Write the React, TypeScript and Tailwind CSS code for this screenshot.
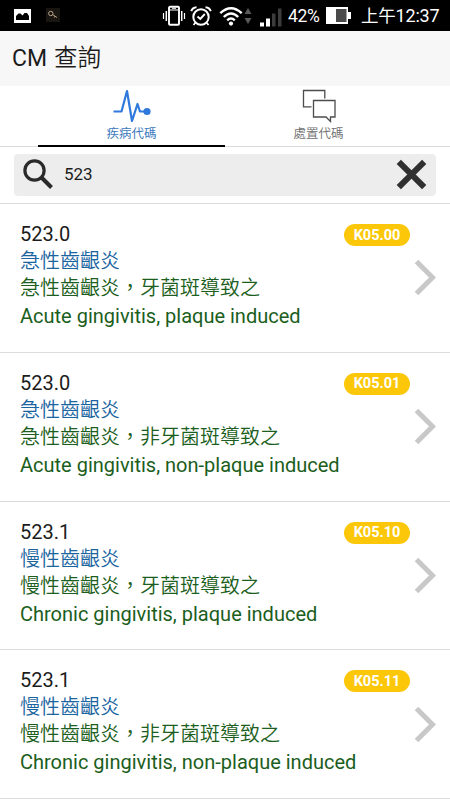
const codes = [
    { code: '523.0', icd10: 'K05.00', name: '急性齒齦炎', zh: '急性齒齦炎，牙菌斑導致之', en: 'Acute gingivitis, plaque induced' },
    { code: '523.0', icd10: 'K05.01', name: '急性齒齦炎', zh: '急性齒齦炎，非牙菌斑導致之', en: 'Acute gingivitis, non-plaque induced' },
    { code: '523.1', icd10: 'K05.10', name: '慢性齒齦炎', zh: '慢性齒齦炎，牙菌斑導致之', en: 'Chronic gingivitis, plaque induced' },
    { code: '523.1', icd10: 'K05.11', name: '慢性齒齦炎', zh: '慢性齒齦炎，非牙菌斑導致之', en: 'Chronic gingivitis, non-plaque induced' },
];

function StatusBar() {
    return (
        <div className="flex h-[31px] shrink-0 items-center bg-black pl-[14px] pr-[11px] text-white">
            {/* notifications */}
            <svg className="h-[14px] w-[17px]" viewBox="0 0 17 14">
                <rect width="17" height="14" fill="#fff" />
                <path d="M2 11V7L4.500 4.500L6.500 4.500L8.500 6.500L10.500 4L13 4L15 7V11Z" fill="#000" />
            </svg>
            <svg className="-mt-[2px] ml-[15px] h-[14px] w-[14px]" viewBox="0 0 14 14">
                <rect width="14" height="14" fill="#191511" />
                <circle cx="4.800" cy="5.500" r="2.200" fill="none" stroke="#b9a38a" />
                <path d="M6.500 6.500L11 9.500M9 8.200L8.300 9.500" stroke="#b9a38a" fill="none" />
            </svg>
            <div className="flex-1"></div>

            {/* vibrate */}
            <svg className="h-[22px] w-[24px]" viewBox="0 0 24 22" fill="none" stroke="#fff">
                <rect x="7" y="1.800" width="10" height="18" rx="1" strokeWidth="1.900" />
                <path d="M7 5H17M10 3.300H14" strokeWidth="1" />
                <path d="M4.300 6V16M19.700 6V16" strokeWidth="1.500" />
                <path d="M1.500 8V14M22.500 8V14" strokeWidth="1.200" />
            </svg>
            {/* alarm */}
            <svg className="ml-[4px] h-[22px] w-[22px]" viewBox="0 0 22 22" fill="none" stroke="#fff">
                <circle cx="11" cy="12" r="7.700" strokeWidth="2" />
                <path d="M7.500 11.500L10.300 14L14.800 9" strokeWidth="1.900" />
                <path d="M1.200 6.200Q2.500 2.500 6.500 2.200M20.800 6.200Q19.500 2.500 15.500 2.200" strokeWidth="2" />
                <path d="M5.500 17.500L3.500 20M16.500 17.500L18.500 20" strokeWidth="1.800" />
            </svg>
            {/* wifi */}
            <svg className="ml-[7px] h-[20px] w-[24px]" viewBox="0 0 24 20" fill="none" stroke="#fff" strokeWidth="2.400">
                <path d="M1.300 7.200Q12 -2.800 22.700 7.200" />
                <path d="M4.800 11Q12 3.800 19.200 11" />
                <path d="M8.200 14.300Q12 10.600 15.800 14.300" />
                <circle cx="12" cy="17.600" r="2.100" fill="#fff" stroke="none" />
            </svg>
            <svg className="ml-[1px] h-[16px] w-[8px]" viewBox="0 0 8 16" fill="#5a5a5a">
                <path d="M4 0L7.500 6H0.500ZM4 16L0.500 10H7.500Z" />
            </svg>
            {/* signal */}
            <svg className="ml-[8px] mt-[3px] h-[19px] w-[22px]" viewBox="0 0 22 19">
                <rect x="0" y="14.500" width="4" height="4" fill="#fff" />
                <rect x="6" y="10.500" width="4" height="8" fill="#fff" />
                <rect x="12" y="5.500" width="3.500" height="13" fill="#3c3c3c" />
                <rect x="18" y="0.500" width="3.500" height="18" fill="#3c3c3c" />
            </svg>
            <span className="ml-[6px] mt-[2px] w-[33px] whitespace-nowrap text-[17.500px] tracking-[-0.300px]">42%</span>
            <svg className="ml-[5px] h-[19px] w-[25px]" viewBox="0 0 25 19">
                <path d="M0 1H22V6H25V13H22V18H0Z" fill="#fff" />
                <rect x="10" y="3" width="10.500" height="13" fill="#4a4a4a" />
            </svg>
            <span className="ml-[10px] w-[78px] whitespace-nowrap text-[18px] tracking-[-0.200px]"><span className="text-[17.500px]">上午</span>12:37</span>
        </div>
    )
}

function Tabs() {
    return (
        <nav className="flex h-[61px] shrink-0 border-b border-[#dcdcdc] px-[38px] text-[12.500px] leading-[16px]">
            <div className="-mb-px flex w-[187px] flex-col items-center border-b-2 border-black text-[#3b78bd]">
                <svg className="mt-[3px] h-[34px] w-[38px]" viewBox="0 0 38 34" fill="none" stroke="#2f78dc" strokeWidth="2.200">
                    <path d="M0.500 22.500H8.500L14 2L19 32L24.500 15L27 22.500H33" strokeLinejoin="round" />
                    <circle cx="34" cy="22.500" r="3.600" fill="#2f78dc" stroke="none" />
                </svg>
                <span className="mt-[3px]">疾病代碼</span>
            </div>
            <div className="flex w-[187px] flex-col items-center text-[#6e6e6e]">
                <svg className="mt-[3px] h-[34px] w-[34px]" viewBox="0 0 34 34" fill="none" stroke="#4c4c4c" strokeWidth="1.300">
                    <path d="M9.500 17.800H1.500V1.500H22.800V9.500" />
                    <path d="M11.500 11.500H33V28H28.500V32.500L24 28H11.500Z" />
                </svg>
                <span className="mt-[3px] font-[350]">處置代碼</span>
            </div>
        </nav>
    )
}

function SearchBar() {
    return (
        <div className="flex h-[57px] shrink-0 items-center border-b border-[#dcdcdc] px-[14px]">
            <div className="flex h-[42px] w-full items-center rounded-[4px] bg-[#ededed] px-[9px]">
                <svg className="-mt-[2px] h-[30px] w-[30px]" viewBox="0 0 30 30" fill="none" stroke="#2a2a2a">
                    <circle cx="11.500" cy="11.500" r="9.600" strokeWidth="3.200" />
                    <path d="M18.500 18.500L28.500 28.500" strokeWidth="4" />
                </svg>
                <span className="-mt-px ml-[11px] flex-1 text-[17px] text-[#1c1c1c]">523</span>
                <svg className="-mt-[2px] h-[31px] w-[31px]" viewBox="0 0 31 31" stroke="#303030" strokeWidth="6">
                    <path d="M2.800 2.800L28.200 28.200M28.200 2.800L2.800 28.200" />
                </svg>
            </div>
        </div>
    )
}

function CodeRow({ item }: { item: (typeof codes)[number] }) {
    return (
        <li className="flex h-[148.75px] shrink-0 border-b border-[#dcdcdc] pl-[20px] pr-[14px] text-[20px] leading-[27px]">
            <div className="flex-1 whitespace-nowrap pt-[17px]">
                <p className="text-[#1c1c1c]">{item.code}</p>
                <p className="font-[350] text-[#1a659f]">{item.name}</p>
                <p className="font-[350] text-[#1b5e20]">{item.zh}</p>
                <p className="mt-px text-[#1b5e20]">{item.en}</p>
            </div>
            <div className="relative flex w-[22px] items-center">
                <span className="absolute right-[26px] top-[20px] flex h-[22px] w-[66px] items-center justify-center rounded-full bg-[#fcc708] text-[14.500px] font-bold text-white">{item.icd10}</span>
                <svg className="h-[37px] w-[22px]" viewBox="0 0 22 37" fill="none" stroke="#c8c8c8" strokeWidth="5">
                    <path d="M2.500 2.500L18.500 18.500L2.500 34.500" />
                </svg>
            </div>
        </li>
    )
}

export default function App() {
    return (
        <main className="flex h-[800px] w-[450px] flex-col overflow-hidden bg-white font-['Roboto','Noto_Sans_CJK_TC',sans-serif]">
            <StatusBar />
            <header className="flex h-[55px] shrink-0 items-center gap-[7px] bg-[#f7f7f7] pl-[12px] pt-px text-[23px] text-[#1c1c1c]">
                <span>CM</span>
                <span className="text-[23.500px] font-[350]">查詢</span>
            </header>
            <Tabs />
            <SearchBar />
            <ul className="flex flex-col">
                {codes.map((item) => (
                    <CodeRow key={item.icd10} item={item} />
                ))}
            </ul>
        </main>
    )
}
